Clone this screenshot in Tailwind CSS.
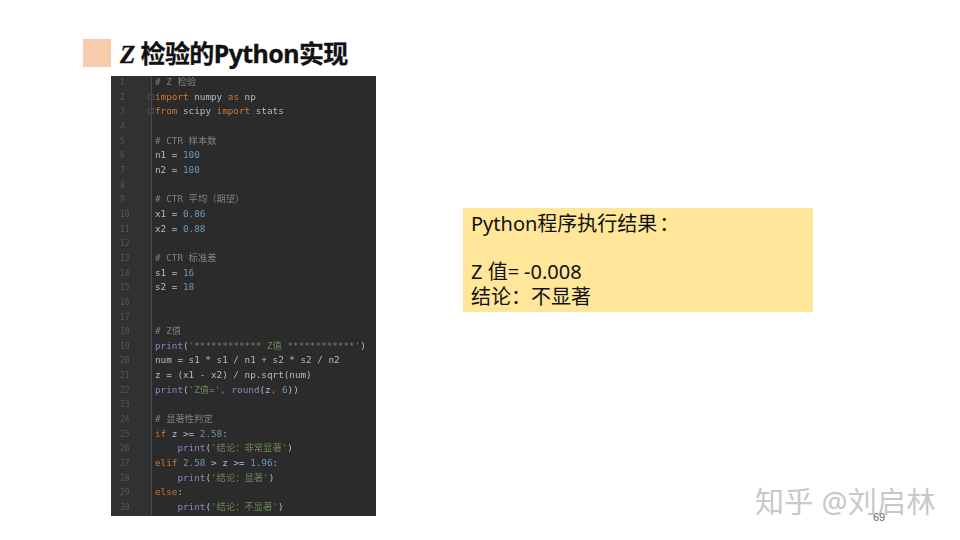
<!DOCTYPE html>
<html lang="zh-CN">
<head>
<meta charset="UTF-8">
<title>Z 检验的Python实现</title>
<script src="https://cdn.jsdelivr.net/npm/@tailwindcss/browser@4"></script>
</head>
<body class="bg-white">
<div class="relative w-[960px] h-[540px] overflow-hidden bg-white font-['Noto_Sans','Noto_Sans_CJK_SC',sans-serif]">

    <!-- title -->
    <div class="flex items-center h-[28px] mt-[39px] ml-[83px]">
        <div class="w-[28px] h-[28px] bg-[#f8cbad]"></div>
        <h1 class="ml-[9px] pt-[2px] text-[25px] font-bold text-[#111] leading-[28px] tracking-[-0.6px] whitespace-nowrap [-webkit-text-stroke:0.3px_#111]"><span class="font-['Liberation_Serif'] italic">Z</span> 检验的Python实现</h1>
    </div>

    <div class="flex items-start mt-[9px] ml-[111px]">
        <!-- code panel -->
        <div class="flex w-[265px] h-[440px] bg-[#2b2b2b] overflow-hidden font-['DejaVu_Sans_Mono','Noto_Sans_CJK_SC',monospace] text-[9.3px] leading-[14.66px] blur-[0.4px]">
            <div class="w-[41px] h-full bg-[#2f3133] border-r border-[#4a4a4a] pl-[9px] text-[#55585a] text-[8px] shrink-0">
                <div>1</div><div>2</div><div>3</div><div>4</div><div>5</div><div>6</div><div>7</div><div>8</div><div>9</div><div>10</div>
                <div>11</div><div>12</div><div>13</div><div>14</div><div>15</div><div>16</div><div>17</div><div>18</div><div>19</div><div>20</div>
                <div>21</div><div>22</div><div>23</div><div>24</div><div>25</div><div>26</div><div>27</div><div>28</div><div>29</div><div>30</div>
            </div>
            <div class="pl-[3px] -mt-[1px] text-[#b4bcc4] whitespace-nowrap">
                <div class="text-[#808080]"># Z 检验</div>
                <div class="relative"><span class="absolute left-[-7px] top-[4px] w-[6px] h-[6px] border border-[#4a4a4a]"></span><span class="text-[#cc7832]">import</span> numpy <span class="text-[#cc7832]">as</span> np</div>
                <div class="relative"><span class="absolute left-[-7px] top-[4px] w-[6px] h-[6px] border border-[#4a4a4a]"></span><span class="text-[#cc7832]">from</span> scipy <span class="text-[#cc7832]">import</span> stats</div>
                <div>&nbsp;</div>
                <div class="text-[#808080]"># CTR 样本数</div>
                <div>n1 = <span class="text-[#6897bb]">100</span></div>
                <div>n2 = <span class="text-[#6897bb]">100</span></div>
                <div>&nbsp;</div>
                <div class="text-[#808080]"># CTR 平均（期望）</div>
                <div>x1 = <span class="text-[#6897bb]">0.86</span></div>
                <div>x2 = <span class="text-[#6897bb]">0.88</span></div>
                <div>&nbsp;</div>
                <div class="text-[#808080]"># CTR 标准差</div>
                <div>s1 = <span class="text-[#6897bb]">16</span></div>
                <div>s2 = <span class="text-[#6897bb]">18</span></div>
                <div>&nbsp;</div>
                <div>&nbsp;</div>
                <div class="text-[#808080]"># Z值</div>
                <div><span class="text-[#8888c6]">print</span>(<span class="text-[#6a8759]">'************ Z值 ************'</span>)</div>
                <div>num = s1 * s1 / n1 + s2 * s2 / n2</div>
                <div>z = (x1 - x2) / np.sqrt(num)</div>
                <div><span class="text-[#8888c6]">print</span>(<span class="text-[#6a8759]">'Z值='</span><span class="text-[#cc7832]">,</span> <span class="text-[#8888c6]">round</span>(z<span class="text-[#cc7832]">,</span> <span class="text-[#6897bb]">6</span>))</div>
                <div>&nbsp;</div>
                <div class="text-[#808080]"># 显著性判定</div>
                <div><span class="text-[#cc7832]">if</span> z &gt;= <span class="text-[#6897bb]">2.58</span>:</div>
                <div class="pl-[22.4px]"><span class="text-[#8888c6]">print</span>(<span class="text-[#6a8759]">'结论：非常显著'</span>)</div>
                <div><span class="text-[#cc7832]">elif</span> <span class="text-[#6897bb]">2.58</span> &gt; z &gt;= <span class="text-[#6897bb]">1.96</span>:</div>
                <div class="pl-[22.4px]"><span class="text-[#8888c6]">print</span>(<span class="text-[#6a8759]">'结论：显著'</span>)</div>
                <div><span class="text-[#cc7832]">else</span>:</div>
                <div class="pl-[22.4px]"><span class="text-[#8888c6]">print</span>(<span class="text-[#6a8759]">'结论：不显著'</span>)</div>
            </div>
        </div>

        <!-- result box -->
        <div class="ml-[87px] mt-[132px] w-[350px] h-[104px] bg-[#ffe699] px-[8px] pt-[3px] text-[20px] leading-[24px] text-[#111]">
            <div>Python程序执行结果<span class="ml-[2px] font-['Noto_Sans_CJK_TC']">：</span></div>
            <div>&nbsp;</div>
            <div>Z 值=<span class="ml-[5px]">-0.008</span></div>
            <div>结论<span class="font-['Noto_Sans_CJK_TC']">：</span>不显著</div>
        </div>
    </div>

    <!-- watermark and page number lie over the slide -->
    <div class="absolute left-[755px] top-[483px] text-[29px] leading-[38px] tracking-[0.3px] text-[#c8c8c8] whitespace-nowrap">知乎 @刘启林</div>
    <div class="absolute left-[873px] top-[510px] text-[11px] leading-[14px] text-[#666] font-['Liberation_Sans',sans-serif]">69</div>
</div>
</body>
</html>
